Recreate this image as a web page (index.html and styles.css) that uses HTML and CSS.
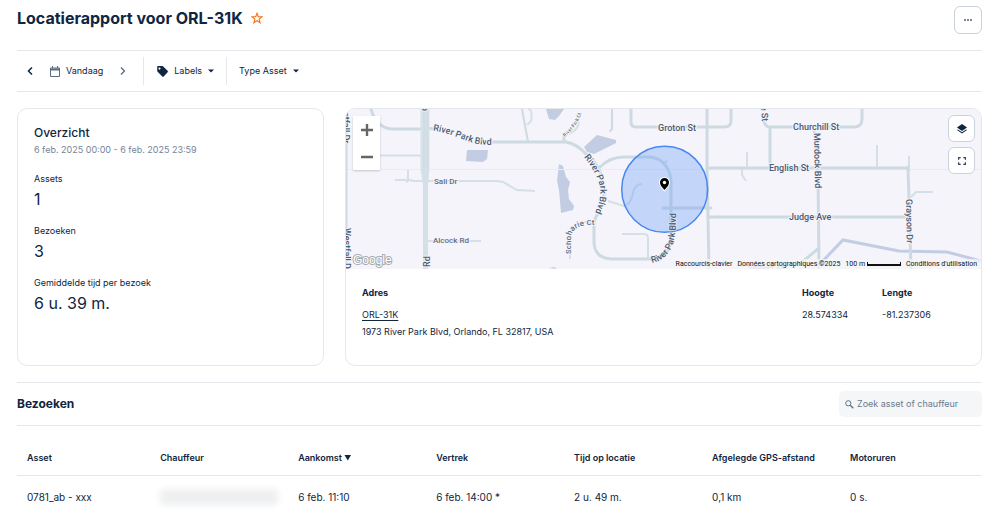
FILE: index.html
```html
<!DOCTYPE html>
<html lang="nl">
<head>
<meta charset="utf-8">
<meta name="viewport" content="width=device-width, initial-scale=1">
<title>Locatierapport voor ORL-31K</title>
<link rel="stylesheet" href="styles.css">
</head>
<body>
<main class="page">
  <header class="page-header">
    <h1 class="page-title">Locatierapport voor ORL-31K</h1>
    <button class="star" type="button" aria-label="Favoriet">
      <svg width="12" height="12" viewBox="0 0 24 24" fill="none" stroke="#f97316" stroke-width="2.2"><path d="M12 2.500l2.600 6.800 7.400.4-5.800 4.600 2 7.200-6.200-4.100-6.200 4.100 2-7.200L2 9.700l7.400-.4z"/></svg>
    </button>
    <button class="icon-button more" type="button" aria-label="Meer">
      <svg width="10" height="4" viewBox="0 0 10 4" fill="#7b8a9b"><path d="M1 1h2v2H1zM4 1h2v2H4zM7 1h2v2H7z"/></svg>
    </button>
  </header>

  <nav class="toolbar" aria-label="Filters">
    <div class="tool-group dates">
      <button class="tool" type="button" aria-label="Vorige"><svg width="6" height="8" viewBox="0 0 6 8" fill="none" stroke="#0f2540" stroke-width="1.500"><path d="M5 .5L1.500 4 5 7.500"/></svg></button>
      <button class="tool today" type="button">
        <svg width="10" height="11" viewBox="0 0 10 11" fill="none" stroke="#5b6b80"><path d="M.5 2h9v8.500h-9z"/><path d="M1 3.500h8" stroke-width="2"/><path d="M2.500 0v2M7.500 0v2"/></svg>
        <span>Vandaag</span>
      </button>
      <button class="tool" type="button" aria-label="Volgende"><svg width="6" height="8" viewBox="0 0 6 8" fill="none" stroke="#53647a" stroke-width="1.200"><path d="M1 .5L4.500 4 1 7.500"/></svg></button>
    </div>
    <div class="tool-group labels">
      <button class="tool tag" type="button">
        <svg width="11" height="11" viewBox="0 0 11 11" fill="#0f2540" fill-rule="evenodd"><path d="M1 0h4.300q.5 0 .9.400l4.400 4.400q.6.700 0 1.400l-3.900 4.200q-.7.600-1.400 0L.6 5.700Q.2 5.300.2 4.800V1Q.2 0 1 0zM2.500 1.400a1 1 0 1 0 .01 0z"/></svg>
        <span>Labels</span>
        <svg class="caret" width="6" height="4" viewBox="0 0 6 4" fill="#0f2540"><path d="M0 .5h6L3 3.500z"/></svg>
      </button>
    </div>
    <div class="tool-group">
      <button class="tool" type="button">
        <span>Type Asset</span>
        <svg class="caret" width="6" height="4" viewBox="0 0 6 4" fill="#0f2540"><path d="M0 .5h6L3 3.500z"/></svg>
      </button>
    </div>
  </nav>

  <div class="cards">
    <section class="card overview">
      <h2 class="card-title">Overzicht</h2>
      <p class="period">6 feb. 2025 00:00 - 6 feb. 2025 23:59</p>
      <dl class="stats">
        <div class="stat"><dt>Assets</dt><dd>1</dd></div>
        <div class="stat"><dt>Bezoeken</dt><dd>3</dd></div>
        <div class="stat"><dt>Gemiddelde tijd per bezoek</dt><dd>6 u. 39 m.</dd></div>
      </dl>
    </section>

    <section class="card location">
      <div class="map">
        <svg class="map-canvas" viewBox="346 109 635 160" preserveAspectRatio="xMidYMid slice" role="img" aria-label="Kaart">
          <defs>
            <path id="rpb-west" d="M433 130.500C445 132 457 137 469 141.500C477 144.500 484 145 500 145"/>
            <path id="rpb-mid" d="M584 157C592 167 598 177 600 187C601 196 600 202 593 218"/>
            <path id="rpb-south" d="M652 263C662 261 669 255 673 244C676 233 676 224 676 200"/>
            <path id="schoharie" d="M571 254V239C571 230 577 226 589 225H600"/>
            <path id="rpc" d="M565 137C572 130 579 123 581 114V100"/>
          </defs>
          <path d="M346 109h635v160H346z" fill="#f4f4fa"/>
          <g fill="#c2cde4">
            <path d="M467 150l21 0-1 9-4 3-17-1z"/>
            <path d="M546 109h18l-5 7-4 4-6-1z"/>
            <path d="M584 147l13-12 19 5 0 3-22 11-7-2z"/>
            <path d="M559 164l4 2 3 11 4 5-2 8 1 9 5 7-1 4-12 3-2-23-2-9z"/>
            <path d="M549 268l5-1 3 2z"/>
          </g>
          <path class="water-line" d="M818 266l25-26 56 11 48 1 34 9"/>
          <g class="seam"><path d="M346 169.500h635"/></g>
          <g class="minor">
            <path d="M380 155.500h43M395 180h15l4 1h83M408 170v11l-2 1M497 181l6 1 14 8 18 1M427 241h54M608 201l16 5q7-2 9-13 2-9 9-9M622 234h22q4 0 4 4v20M570 240v19M584 222h12M528 109q5 0 3 12l-4 4M579 121q0 9-12 14M667 160l-2 3M747 152v17M742 169v6l4 6M877 145v22M909 156v15M911 197l5-5h17"/>
          </g>
          <g class="road">
            <path d="M371 109q5 18 20 20h37M425 128l10 1M491 142h75q11 2 20 12M564 141v-5"/>
            <path d="M522 109l6 33M612 109v20l-2 2" class="edge"/>
            <path d="M600 167q10-10 24-10h25q18 1 22 22v60q-1 18-18 20h-42q-16-1-17-16v-18q0-8 6-13M600 208q6-10 3-25M586 154q14 10 17 29M663 208h48"/>
            <path d="M631 109v13q0 5 5 5h88q7 0 7-6v-12M707 109v58l2 101M709 168h199M710 217h198M763 119q2 8 7 8h84q8 0 8-8v-10M770 127v41M814 130l4 40 1 98M908 167l3 101M819 248l-18 15"/>
            <path d="M346.500 120v149" class="edge"/>
          </g>
          <path d="M425 109v59" stroke="#d7e1e8" stroke-width="9"/>
          <path d="M420.500 168h9l-1.500 17v84h-5v-84z" fill="#d4dfe7"/>
          <path d="M424 109v59M427 109v59" stroke="#c8d5de" stroke-width="1"/>
          <circle cx="664.700" cy="189.300" r="43" fill="#669df6" fill-opacity=".35" stroke="#4a88f0" stroke-width="1.500"/>
          <g class="road-label">
            <text><textPath href="#rpb-west">River Park Blvd</textPath></text>
            <text><textPath href="#rpb-mid">River Park Blvd</textPath></text>
            <text class="over-zone"><textPath href="#rpb-south">River Park Blvd</textPath></text>
            <text x="658" y="131">Groton St</text>
            <text x="793" y="130">Churchill St</text>
            <text x="769" y="171">English St</text>
            <text x="789" y="220">Judge Ave</text>
            <text transform="translate(814 133) rotate(89)">Murdock Blvd</text>
            <text transform="translate(906 199) rotate(89)">Grayson Dr</text>
            <text transform="translate(761 106) rotate(86)">e St</text>
            <text transform="translate(430 267) rotate(-90)">Rd</text>
            <text transform="translate(427 111) rotate(-90)">d</text>
            <text transform="translate(344 228) rotate(90)">Westfall Dr</text>
            <text transform="translate(343 112) rotate(90)">stfall Dr</text>
          </g>
          <g class="road-label small">
            <text x="434" y="184">Sali Dr</text>
            <text x="433" y="243">Alcock Rd</text>
            <text><textPath href="#schoharie">Schoharie Ct</textPath></text>
            <text class="tiny"><textPath href="#rpc">River Park Ct</textPath></text>
            <text class="ghost" x="748" y="270">Sawyer St</text>
          </g>
          <path d="M664.500 190c-3-3.500-4.500-5-4.500-7.500a4.500 4.500 0 0 1 9 0c0 2.500-1.500 4-4.500 7.500z" fill="#000" stroke="#fff" stroke-width="2" paint-order="stroke"/>
          <circle cx="664.500" cy="182.500" r="1.700" fill="#fff"/>
        </svg>
        <div class="zoom">
          <button type="button" aria-label="Inzoomen"><svg width="12" height="12" viewBox="0 0 12 12" stroke="#666" stroke-width="2.400"><path d="M6 0v12M0 6h12"/></svg></button>
          <button type="button" aria-label="Uitzoomen"><svg width="12" height="12" viewBox="0 0 12 12" stroke="#666" stroke-width="2.400"><path d="M0 6h12"/></svg></button>
        </div>
        <div class="map-tools">
          <button class="icon-button" type="button" aria-label="Kaartlagen"><svg width="10" height="10" viewBox="0 0 10 10" fill="#0f2540"><path d="M5 0l5 3.500L5 7 0 3.500z"/><path d="M.9 5.400L5 8.200l4.100-2.800.9.700L5 9.600 0 6.100z"/></svg></button>
          <button class="icon-button" type="button" aria-label="Volledig scherm"><svg width="8" height="8" viewBox="0 0 8 8" fill="none" stroke="#33465e" stroke-width="1.300"><path d="M.6 2.700V.6h2.100M5.300.6h2.100v2.100M7.400 5.300v2.100H5.300M2.700 7.400H.6V5.300"/></svg></button>
        </div>
        <span class="google">Google</span>
        <div class="attribution">
          <button type="button">Raccourcis-clavier</button>
          <span>Données cartographiques ©2025</span>
          <span class="scale">100 m <i class="scale-bar"></i></span>
          <a href="#">Conditions d'utilisation</a>
        </div>
      </div>
      <div class="address">
        <div>
          <h3>Adres</h3>
          <p><a href="#">ORL-31K</a></p>
          <p>1973 River Park Blvd, Orlando, FL 32817, USA</p>
        </div>
        <div>
          <h3>Hoogte</h3>
          <p>28.574334</p>
        </div>
        <div>
          <h3>Lengte</h3>
          <p>-81.237306</p>
        </div>
      </div>
    </section>
  </div>

  <section class="visits">
    <div class="visits-header">
      <h2>Bezoeken</h2>
      <label class="search">
        <svg width="9" height="9" viewBox="0 0 9 9" fill="none" stroke="#5f7085"><circle cx="3.300" cy="3.300" r="2.600"/><path d="M5.300 5.300l3 3" stroke-width="1.300"/></svg>
        <input type="search" placeholder="Zoek asset of chauffeur" aria-label="Zoek asset of chauffeur">
      </label>
    </div>
    <table>
      <colgroup><col class="col-asset"><col class="col"><col class="col"><col class="col"><col class="col"><col class="col"><col></colgroup>
      <thead>
        <tr><th>Asset</th><th>Chauffeur</th><th>Aankomst <svg width="7" height="6" viewBox="0 0 7 6" fill="#0f2540"><path d="M.5 0h6.500L3.800 5.500z"/></svg></th><th>Vertrek</th><th>Tijd op locatie</th><th>Afgelegde GPS-afstand</th><th>Motoruren</th></tr>
      </thead>
      <tbody>
        <tr><td>0781_ab - xxx</td><td><span class="redacted"></span></td><td>6 feb. 11:10</td><td>6 feb. 14:00 *</td><td>2 u. 49 m.</td><td>0,1 km</td><td>0 s.</td></tr>
      </tbody>
    </table>
  </section>
</main>
</body>
</html>
```
FILE: styles.css
```css
* { box-sizing: border-box; }

body {
  margin: 0;
  background: #fff;
  color: #0f2540;
  font: 9px/16px Inter, "Liberation Sans", sans-serif;
}

h1, h2, h3, p, dl, dd { margin: 0; }

button {
  padding: 0;
  border: 0;
  background: none;
  color: inherit;
  font: inherit;
  cursor: pointer;
}

svg { flex: none; }

.page { padding: 0 12px 0 17px; }

.page-header {
  display: flex;
  align-items: flex-start;
  padding: 6px 0 16px;
}

.page-title {
  font-size: 16px;
  line-height: 24px;
  font-weight: 700;
}

.star {
  display: flex;
  align-items: center;
  height: 24px;
  margin-left: 8px;
}

.icon-button {
  display: flex;
  align-items: center;
  justify-content: center;
  width: 27px;
  height: 27px;
  border: 1px solid #cbd2da;
  border-radius: 6px;
  background: #fff;
}

.more { width: 28px; height: 28px; margin-left: auto; }

.toolbar {
  display: flex;
  align-items: center;
  padding: 6px 0;
  border-top: 1px solid #e4e7ec;
  border-bottom: 1px solid #e4e7ec;
}

.tool-group {
  display: flex;
  align-items: center;
  height: 28px;
  padding: 0 12px;
}

.tool-group + .tool-group { border-left: 1px solid #e4e7ec; }

.dates { gap: 17px; padding: 0 17px 0 10px; }

.labels { padding: 0 12px 0 13px; }

.tool { display: flex; align-items: center; gap: 6px; }

.cards {
  display: grid;
  grid-template-columns: 307fr 637fr;
  gap: 21px;
  padding: 16px 0;
}

.card {
  min-width: 0;
  overflow: hidden;
  border: 1px solid #e4e7ec;
  border-radius: 10px;
}

.overview { padding: 15px 16px; }

.card-title {
  font-size: 12px;
  line-height: 18px;
  font-weight: 500;
}

.period { color: #76859a; }

.stats { display: grid; gap: 12px; margin-top: 13px; }

.stat dd { font-size: 16px; line-height: 24px; }

.map { position: relative; height: 160px; }

.map-canvas { display: block; width: 100%; height: 100%; }

.road { fill: none; stroke: #cedae2; stroke-width: 3; stroke-linecap: round; stroke-linejoin: round; }

.road .edge { stroke-width: 2; }

.minor { fill: none; stroke: #d5dfe6; stroke-width: 2; }

.water-line { fill: none; stroke: #c2cde4; stroke-width: 3; }

.seam { stroke: #e9ecf3; }

.road-label {
  fill: #4a5b72;
  stroke: #f4f4fa;
  stroke-width: 2px;
  stroke-linejoin: round;
  paint-order: stroke;
  font: 500 9px Roboto, sans-serif;
}

.road-label .over-zone { stroke-opacity: .4; }

.road-label.small { fill: #5f6e82; font-size: 8px; }

.road-label .tiny { font-size: 5px; }

.road-label .ghost { fill: #b8c0ca; }

.zoom {
  position: absolute;
  top: 7px;
  left: 7px;
  display: grid;
  background: #fff;
  box-shadow: 0 1px 2px #0003;
}

.zoom button {
  display: flex;
  align-items: center;
  justify-content: center;
  width: 27px;
  height: 27px;
}

.map-tools {
  position: absolute;
  top: 6px;
  right: 6px;
  display: grid;
  gap: 5px;
}

.google {
  position: absolute;
  left: 7px;
  bottom: 0;
  color: #fff;
  font: 500 12px/17px "Liberation Sans", sans-serif;
  -webkit-text-stroke: 2px #a9adb4;
  paint-order: stroke;
}

.attribution {
  position: absolute;
  right: 0;
  bottom: 0;
  display: flex;
  gap: 5px;
  padding: 0 4px;
  background: #f5f5f5b3;
  color: #111;
  font: 7px/10px Roboto, sans-serif;
  white-space: nowrap;
}

.attribution a { color: inherit; text-decoration: none; }

.scale { display: flex; align-items: center; gap: 2px; }

.scale-bar {
  width: 34px;
  height: 4px;
  border: solid #111;
  border-width: 0 1px 2px;
}

.address {
  display: grid;
  grid-template-columns: 1fr 80px 83px;
  padding: 16px 16px 25px;
}

.address h3 { margin-bottom: 5px; font-size: 9px; line-height: 16px; font-weight: 700; }

.address p { line-height: 17px; }

.address a { color: inherit; text-underline-offset: 2px; }

.visits { border-top: 1px solid #e4e7ec; }

.visits-header {
  display: flex;
  align-items: center;
  justify-content: space-between;
  padding: 8px 0;
  border-bottom: 1px solid #e4e7ec;
}

.visits-header h2 { font-size: 12px; line-height: 20px; font-weight: 700; }

.search {
  display: flex;
  align-items: center;
  gap: 3px;
  width: 143px;
  height: 26px;
  padding: 0 6px;
  border-radius: 5px;
  background: #f5f6f8;
}

.search input {
  min-width: 0;
  flex: 1;
  padding: 0;
  border: 0;
  outline: 0;
  background: none;
  color: inherit;
  font: inherit;
}

.search input::placeholder { color: #6b7a8d; opacity: 1; }

table {
  width: 100%;
  border-collapse: collapse;
  table-layout: fixed;
}

.col-asset { width: 13.8%; }

.col { width: 14.3%; }

th, td { padding: 0 10px; text-align: left; white-space: nowrap; }

th { height: 49px; padding-top: 15px; font-weight: 600; }

thead tr { border-bottom: 1px solid #e4e7ec; }

td { height: 44px; font-size: 10px; }

.redacted {
  display: block;
  height: 16px;
  border-radius: 4px;
  background: #eeeff0;
  filter: blur(3px);
}
```
